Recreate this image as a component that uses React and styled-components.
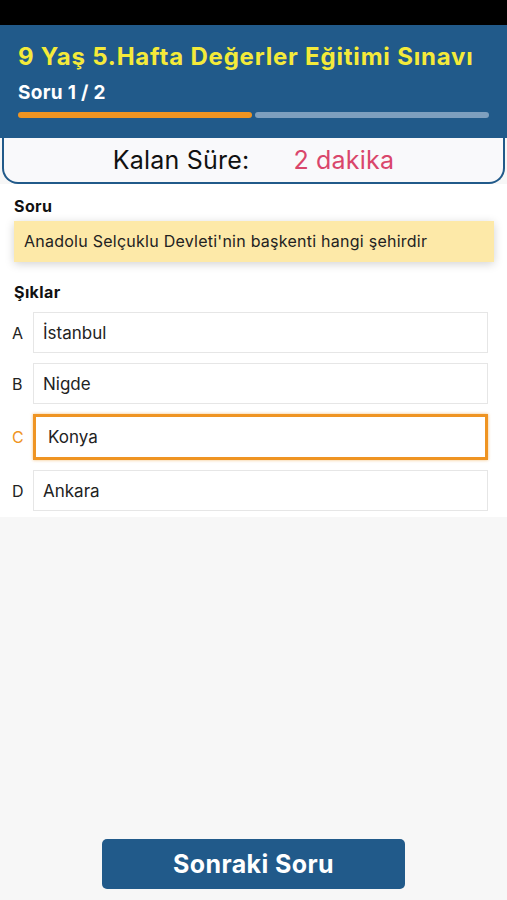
import styled, { createGlobalStyle } from "styled-components";

const GlobalStyle = createGlobalStyle`
  * { box-sizing: border-box; }
  body {
    margin: 0;
    font-family: Inter, "Liberation Sans", sans-serif;
    background: #f7f7f7;
  }
`;

const Page = styled.div`
  width: 507px;
  height: 900px;
  display: flex;
  flex-direction: column;
  background: #f7f7f7;
`;

const StatusBar = styled.div`
  height: 25px;
  background: #000;
`;

const Header = styled.div`
  background: #215a8a;
  padding: 17px 18px 20px 18px;
  display: flex;
  flex-direction: column;
`;

const Title = styled.h1`
  margin: 0;
  color: #f4ea3a;
  font-family: Inter, sans-serif;
  font-size: 24px;
  font-weight: 700;
  letter-spacing: 0.8px;
  line-height: 30px;
  white-space: nowrap;
`;

const Subtitle = styled.div`
  color: #fff;
  font-family: Inter, sans-serif;
  font-size: 19px;
  font-weight: 700;
  letter-spacing: 0.3px;
  line-height: 26px;
  margin-top: 8px;
`;

const Progress = styled.div`
  display: flex;
  gap: 3px;
  margin-top: 6px;
`;

const Segment = styled.div`
  flex: 1;
  height: 6px;
  border-radius: 3px;
  background: ${(p) => (p.$done ? "#ef9422" : "#7e9fbe")};
`;

const TimerCard = styled.div`
  margin: 0 2px;
  height: 46px;
  background: #f9f9fb;
  border: 2px solid #215a8a;
  border-top: none;
  border-radius: 0 0 16px 16px;
  display: flex;
  align-items: center;
  justify-content: center;
  gap: 44px;
  font-family: Inter, sans-serif;
  font-size: 25px;
  letter-spacing: 0.2px;
`;

const TimerLabel = styled.span`
  color: #111;
`;

const TimerValue = styled.span`
  color: #d9466b;
`;

const Body = styled.div`
  background: #fff;
  padding: 12px 19px 6px 12px;
  display: flex;
  flex-direction: column;
`;

const SectionLabel = styled.div`
  font-family: Inter, sans-serif;
  font-size: 16px;
  font-weight: 700;
  letter-spacing: 0.4px;
  color: #111;
  line-height: 20px;
  padding-left: 2px;
  margin-top: ${(p) => p.$gap || 0}px;
`;

const QuestionBox = styled.div`
  margin: 5px -6px 0 2px;
  background: #fde9a8;
  padding: 9px 10px 10px;
  font-family: Inter, sans-serif;
  font-size: 16px;
  letter-spacing: 0.25px;
  color: #222;
  line-height: 22px;
  box-shadow: 0 2px 9px rgba(0, 0, 0, 0.18);
`;

const Options = styled.div`
  display: flex;
  flex-direction: column;
  gap: 10px;
  margin-top: 10px;
`;

const OptionRow = styled.div`
  display: flex;
  align-items: center;
`;

const Letter = styled.span`
  width: 21px;
  font-family: Inter, sans-serif;
  font-size: 16px;
  color: ${(p) => (p.$active ? "#ef9422" : "#222")};
`;

const OptionBox = styled.div`
  flex: 1;
  height: ${(p) => (p.$active ? 46 : 41)}px;
  display: flex;
  align-items: center;
  padding-left: ${(p) => (p.$active ? 12 : 9)}px;
  background: #fff;
  border: ${(p) => (p.$active ? "3px solid #ef9422" : "1px solid #e6e6e6")};
  box-shadow: ${(p) => (p.$active ? "0 0 3px rgba(239,148,34,0.6)" : "none")};
  font-family: Inter, sans-serif;
  font-size: 17px;
  color: #222;
`;

const Spacer = styled.div`
  flex: 1;
`;

const Footer = styled.div`
  display: flex;
  justify-content: center;
  padding-bottom: 11px;
`;

const NextButton = styled.button`
  width: 303px;
  height: 50px;
  background: #215a8a;
  border: none;
  border-radius: 5px;
  color: #fff;
  font-family: Inter, sans-serif;
  font-size: 25px;
  font-weight: 700;
  letter-spacing: 0.4px;
  cursor: pointer;
`;

const options = [
  { key: "A", text: "İstanbul" },
  { key: "B", text: "Nigde" },
  { key: "C", text: "Konya", active: true },
  { key: "D", text: "Ankara" },
];

export default function App() {
  return (
    <>
      <GlobalStyle />
      <Page>
        <StatusBar />
        <Header>
          <Title>9 Yaş 5.Hafta Değerler Eğitimi Sınavı</Title>
          <Subtitle>Soru 1 / 2</Subtitle>
          <Progress>
            <Segment $done />
            <Segment />
          </Progress>
        </Header>
        <TimerCard>
          <TimerLabel>Kalan Süre:</TimerLabel>
          <TimerValue>2 dakika</TimerValue>
        </TimerCard>
        <Body>
          <SectionLabel>Soru</SectionLabel>
          <QuestionBox>Anadolu Selçuklu Devleti'nin başkenti hangi şehirdir</QuestionBox>
          <SectionLabel $gap={20}>Şıklar</SectionLabel>
          <Options>
            {options.map((o) => (
              <OptionRow key={o.key}>
                <Letter $active={o.active}>{o.key}</Letter>
                <OptionBox $active={o.active}>{o.text}</OptionBox>
              </OptionRow>
            ))}
          </Options>
        </Body>
        <Spacer />
        <Footer>
          <NextButton>Sonraki Soru</NextButton>
        </Footer>
      </Page>
    </>
  );
}
